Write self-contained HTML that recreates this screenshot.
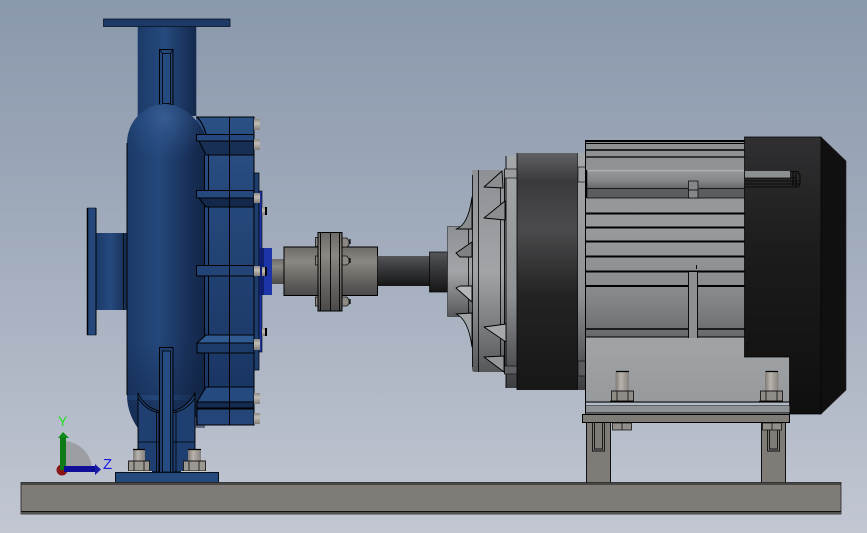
<!DOCTYPE html>
<html><head><meta charset="utf-8"><style>
html,body{margin:0;padding:0;width:867px;height:533px;overflow:hidden;background:#a5aebd}
svg{display:block}
</style></head><body>
<svg width="867" height="533" viewBox="0 0 867 533" xmlns="http://www.w3.org/2000/svg">
<defs>
<linearGradient id="bg" x1="0" y1="0" x2="0" y2="1"><stop offset="0" stop-color="#8a98ac"/><stop offset=".5" stop-color="#a4aebe"/><stop offset="1" stop-color="#c2c7d2"/></linearGradient>
<linearGradient id="pipe" x1="0" y1="0" x2="1" y2="0"><stop offset="0" stop-color="#1b3a68"/><stop offset=".45" stop-color="#264a7e"/><stop offset="1" stop-color="#13294c"/></linearGradient>
<linearGradient id="bodyH" x1="0" y1="0" x2="1" y2="0"><stop offset="0" stop-color="#1c3a68"/><stop offset=".4" stop-color="#24477b"/><stop offset=".8" stop-color="#182f57"/><stop offset="1" stop-color="#122647"/></linearGradient>
<radialGradient id="dome" gradientUnits="userSpaceOnUse" cx="165" cy="118" r="45"><stop offset="0" stop-color="#3a6096" stop-opacity=".85"/><stop offset="1" stop-color="#2a5088" stop-opacity="0"/></radialGradient>
<linearGradient id="bodyBot" x1="0" y1="0" x2="0" y2="1"><stop offset="0" stop-color="#0d1e3c" stop-opacity="0"/><stop offset="1" stop-color="#0d1e3c" stop-opacity=".65"/></linearGradient>
<linearGradient id="boxV" x1="0" y1="0" x2="0" y2="1"><stop offset="0" stop-color="#2a5084"/><stop offset="1" stop-color="#183260"/></linearGradient>
<linearGradient id="hub" x1="0" y1="0" x2="0" y2="1"><stop offset="0" stop-color="#6e6b68"/><stop offset=".3" stop-color="#8b8782"/><stop offset=".75" stop-color="#5f5d5b"/><stop offset="1" stop-color="#4b4a4a"/></linearGradient>
<linearGradient id="shaft" x1="0" y1="0" x2="0" y2="1"><stop offset="0" stop-color="#55565a"/><stop offset=".35" stop-color="#3c3d40"/><stop offset="1" stop-color="#161617"/></linearGradient>
<linearGradient id="bell" x1="0" y1="0" x2="0" y2="1"><stop offset="0" stop-color="#8d9094"/><stop offset=".5" stop-color="#a2a5a8"/><stop offset=".85" stop-color="#6f7072"/><stop offset="1" stop-color="#565759"/></linearGradient>
<linearGradient id="band" x1="0" y1="0" x2="0" y2="1"><stop offset="0" stop-color="#606163"/><stop offset=".12" stop-color="#3a3a3c"/><stop offset=".32" stop-color="#4b4b4d"/><stop offset=".6" stop-color="#232324"/><stop offset="1" stop-color="#171718"/></linearGradient>
<linearGradient id="ring" x1="0" y1="0" x2="0" y2="1"><stop offset="0" stop-color="#a5a8ab"/><stop offset=".6" stop-color="#8e9194"/><stop offset="1" stop-color="#3c3d3f"/></linearGradient>
<linearGradient id="motor" x1="0" y1="0" x2="0" y2="1"><stop offset="0" stop-color="#8c9092"/><stop offset=".45" stop-color="#979b9d"/><stop offset=".74" stop-color="#8a8d8f"/><stop offset=".9" stop-color="#78797c"/><stop offset="1" stop-color="#66686a"/></linearGradient>
<linearGradient id="plate" x1="0" y1="0" x2="0" y2="1"><stop offset="0" stop-color="#a0a4a6"/><stop offset="1" stop-color="#979a9c"/></linearGradient>
<linearGradient id="cover" x1="0" y1="0" x2="0" y2="1"><stop offset="0" stop-color="#303032"/><stop offset=".4" stop-color="#1c1c1d"/><stop offset="1" stop-color="#0f0f10"/></linearGradient>
<linearGradient id="strip" x1="0" y1="0" x2="0" y2="1"><stop offset="0" stop-color="#b5b8b9"/><stop offset=".12" stop-color="#929697"/><stop offset=".6" stop-color="#85888a"/><stop offset="1" stop-color="#66686a"/></linearGradient>
<linearGradient id="bolt" x1="0" y1="0" x2="1" y2="0"><stop offset="0" stop-color="#7e7a76"/><stop offset=".4" stop-color="#b8b3ac"/><stop offset="1" stop-color="#85817c"/></linearGradient>
<linearGradient id="boltV" x1="0" y1="0" x2="0" y2="1"><stop offset="0" stop-color="#8d8984"/><stop offset=".4" stop-color="#c3beb6"/><stop offset="1" stop-color="#827e79"/></linearGradient>
<clipPath id="bodyClip"><path d="M127 143A38.500 39 0 0 1 165 104C182 104 198 118 205 135V400H127Z M127 395C127 408 132 420 138 428H205V395Z"/></clipPath>
</defs>
<rect width="867" height="533" fill="url(#bg)"/>

<!-- triad -->
<path d="M63 470V441A29 29 0 0 1 92 470Z" fill="#9c9ea3"/>
<circle cx="62" cy="470" r="5.500" fill="#8a1518"/>
<rect x="60" y="438" width="6" height="32" fill="#0e7a14"/>
<path d="M63 432L69 438H58Z" fill="#0e8a18"/>
<rect x="64" y="466" width="31" height="6" fill="#0e0e98"/>
<path d="M101 469.500L95 464V475Z" fill="#1a1aa8"/>
<text x="58" y="426" font-family="Liberation Sans, sans-serif" font-size="14" fill="#22dd22">Y</text>
<text x="103" y="469" font-family="Liberation Sans, sans-serif" font-size="15" fill="#1a1ae6">Z</text>

<!-- pipe and flange -->
<rect x="137.500" y="26" width="59" height="90" fill="url(#pipe)"/>
<path d="M137.500 26V116M196.500 26V116" stroke="#7d8ea6" stroke-width="1" opacity=".6"/>
<rect x="103.500" y="19" width="126.500" height="7.500" fill="#1d3a66" stroke="#0a1424" stroke-width=".8"/>
<rect x="159.500" y="49.500" width="13.500" height="55" fill="none" stroke="#000" stroke-width="1"/>
<rect x="162.500" y="53.500" width="8" height="50" fill="#244a80" stroke="#000" stroke-width=".8"/>
<path d="M159.500 49.500L162.500 53.500M173 49.500L170.500 53.500" stroke="#000" stroke-width=".7"/>

<!-- left nozzle -->
<rect x="96" y="233" width="33" height="77" fill="url(#pipe)"/>
<path d="M123.500 233V310" stroke="#000" stroke-width=".8"/>
<rect x="87.500" y="208" width="8.500" height="127" fill="#25487c" stroke="#0a1424" stroke-width=".6"/>
<path d="M87.500 208V335" stroke="#000" stroke-width="1.500"/>
<path d="M96 208V335" stroke="#000" stroke-width="1"/>

<!-- right casing background -->
<rect x="196" y="117" width="58" height="308" fill="url(#boxV)"/>
<rect x="254" y="173" width="5" height="197" fill="#1e3e6e" stroke="#000" stroke-width=".7"/>
<rect x="259" y="191" width="3" height="161" fill="#1c33a0" stroke="#000" stroke-width=".6"/>
<rect x="262" y="248" width="10" height="47" fill="#1c34a8"/>
<rect x="259" y="248" width="5" height="47" fill="#0f1f70"/>
<path d="M196 117H254V425H196" fill="none" stroke="#000" stroke-width="1"/>

<!-- main body -->
<path d="M127 143A38.500 39 0 0 1 165 104C182 104 198 118 205 135V400C205 412 190 428 165 428H138C132 420 127 408 127 395Z" fill="url(#bodyH)"/>
<path d="M127 143A38.500 39 0 0 1 165 104C182 104 198 118 205 135V240H127Z" fill="url(#dome)"/>
<g clip-path="url(#bodyClip)"><rect x="127" y="340" width="78" height="88" fill="url(#bodyBot)" opacity=".8"/></g>
<path d="M127 143V395" stroke="#000" stroke-width="1"/>
<path d="M197 117C201 121 204 127 206 134" fill="none" stroke="#000" stroke-width="1.200"/>

<!-- casing lines + ribs over body -->
<path d="M204.500 155V390M208.500 155V390M229.500 117V425" stroke="#000" stroke-width="1"/>
<path d="M196.500 134.500H254V141H196.500Z" fill="#25497e" stroke="#000" stroke-width="1"/>
<path d="M199 141H254V155H206Z" fill="#182f55" stroke="#000" stroke-width="1"/>
<path d="M196.500 190.500H254V198H196.500Z" fill="#25497e" stroke="#000" stroke-width="1"/>
<path d="M199 198H254V207H206Z" fill="#13284a" stroke="#000" stroke-width="1"/>
<path d="M196.500 265.500H254V276H196.500Z" fill="#224477" stroke="#000" stroke-width="1"/>
<path d="M206 335H254V343H197Z" fill="#2f5a92" stroke="#000" stroke-width="1"/>
<path d="M197 343H254V353H197Z" fill="#1d3b69" stroke="#000" stroke-width="1"/>
<path d="M206 387H254V402H197Z" fill="#244a80" stroke="#000" stroke-width="1"/>
<path d="M197 402H254V408H197Z" fill="#152b50" stroke="#000" stroke-width="1"/>
<rect x="197" y="409" width="57" height="16" fill="#234577" stroke="#000" stroke-width="1"/>
<path d="M229.500 334V425" stroke="#000" stroke-width="1"/>
<path d="M229.500 134V208M229.500 265V277" stroke="#000" stroke-width="1"/>

<!-- casing bolts -->
<g fill="url(#boltV)">
<rect x="254" y="119" width="6" height="11"/><rect x="254" y="139" width="6" height="11"/>
<rect x="254" y="193" width="6" height="10"/><rect x="254" y="266" width="6" height="10"/>
<rect x="254" y="339" width="6" height="11"/><rect x="254" y="393" width="6" height="11"/>
<rect x="254" y="413" width="6" height="11"/>
<rect x="262" y="207" width="3" height="8"/><rect x="262" y="267" width="3" height="9"/><rect x="262" y="328" width="3" height="8"/>
</g>
<path d="M266 207V215M266 267V276M266 328V336" stroke="#000" stroke-width="2"/>

<!-- foot overlay -->
<path d="M138 393C142 402 150 409 159 411V472H138Z" fill="#1f3f70" stroke="#000" stroke-width=".9"/>
<path d="M195 393C190 402 182 409 173 411V472H195Z" fill="#1f3f70" stroke="#000" stroke-width=".9"/>
<path d="M138 398C143 406 150 411 159 413M195 398C190 406 182 411 173 413M138 442H195M156.500 411V472M176 411V472" fill="none" stroke="#000" stroke-width=".8"/>
<rect x="159.500" y="347.500" width="13.500" height="125" fill="#1f3f70" stroke="#000" stroke-width="1"/>
<rect x="162.500" y="351" width="8" height="121" fill="#264c82" stroke="#000" stroke-width=".8"/>
<rect x="115.500" y="472.500" width="103" height="10" fill="#244a7c" stroke="#06101e" stroke-width="1"/>

<!-- foot nuts -->
<g stroke="#1a1a1a" stroke-width=".9">
<rect x="133" y="449.500" width="12" height="11" fill="url(#bolt)" stroke="none"/>
<rect x="188" y="449.500" width="13" height="11" fill="url(#bolt)" stroke="none"/>
<path d="M128.500 461H149.500V471H128.500Z M134 461V471M144 461V471" fill="#9b9791"/>
<path d="M183.500 461H205.500V471H183.500Z M189 461V471M199 461V471" fill="#9b9791"/>
</g>
<path d="M126 471.500H152M181 471.500H208" stroke="#cfccc6" stroke-width="1"/>
<path d="M133 449.500H145M188 449.500H201" stroke="#000" stroke-width="1.300"/>

<!-- coupling -->
<rect x="272" y="259" width="12" height="25" fill="url(#hub)"/>
<rect x="284" y="247" width="93.500" height="48.500" fill="url(#hub)" stroke="#000" stroke-width="1"/>
<g fill="#8c8884" stroke="#111" stroke-width=".8">
<rect x="315.500" y="237.500" width="3" height="9"/><rect x="315.500" y="256" width="3" height="9"/><rect x="315.500" y="297" width="3" height="9"/>
<path d="M342 238H347L349 241V245L347 247H342Z"/><path d="M342 256H347L349 259V263L347 265H342Z"/><path d="M342 297H347L349 300V304L347 306H342Z"/>
</g>
<path d="M350 239V244M350 258V263M350 299V304" stroke="#000" stroke-width="1.200"/>
<rect x="318" y="232.500" width="24" height="78.500" fill="url(#hub)" stroke="#000" stroke-width="1"/>
<path d="M320.500 233V311M330.500 232V311M339.500 233V311" stroke="#000" stroke-width=".9"/>

<!-- shaft -->
<rect x="377.500" y="256" width="52" height="30" fill="url(#shaft)"/>
<rect x="429.500" y="252" width="18" height="40" fill="url(#shaft)" stroke="#000" stroke-width=".7"/>

<!-- bell -->
<rect x="447.500" y="226.500" width="25" height="90" fill="url(#bell)" stroke="#1a1a1a" stroke-width=".5"/>
<path d="M468.500 227V316" stroke="#000" stroke-width=".8"/>
<path d="M472 170H506V372H475Q472 372 472 369Z" fill="url(#bell)"/>
<path d="M472.500 175V367M478.500 170V372M500.500 178V366" stroke="#000" stroke-width=".8"/>
<rect x="506" y="156" width="11.500" height="232" fill="url(#ring)"/>
<path d="M506 156V388M504.500 170V374" stroke="#000" stroke-width=".9"/>
<rect x="504.500" y="169" width="13" height="9" fill="#9b9ea1" stroke="#111" stroke-width=".7"/>
<rect x="504.500" y="366" width="13" height="8" fill="#5f6063" stroke="#111" stroke-width=".7"/>
<g stroke="#000" stroke-width=".9" stroke-linejoin="round">
<path d="M484 187L502 171L503 188Z" fill="#8b8e91"/>
<path d="M484 218L505 201V220Z" fill="#8b8e91"/>
<path d="M484 327L506 342V324Z" fill="#a6a9ab"/>
<path d="M484 357L504 372V356Z" fill="#95989b"/>
<path d="M456 229C466 226 470 212 472 197V229Z" fill="#8b8e91"/>
<path d="M456 253L472 242V257H460Z" fill="#7f8285"/>
<path d="M456 288L472 302V286H460Z" fill="#b5b7ba"/>
<path d="M456 314C466 318 470 332 472 347V313Z" fill="#a2a5a8"/>
</g>

<!-- dark band -->
<rect x="517" y="153" width="61" height="237" fill="url(#band)"/>
<path d="M517 153V390M578 153V390" stroke="#000" stroke-width=".8"/>
<rect x="578" y="153" width="7.500" height="237" fill="url(#ring)"/>
<rect x="578" y="167" width="7.500" height="15" fill="#9ea1a4" stroke="#111" stroke-width=".7"/>
<rect x="578" y="361" width="7.500" height="15" fill="#5a5b5d" stroke="#111" stroke-width=".7"/>

<!-- motor -->
<rect x="585.500" y="140" width="160" height="197" fill="url(#motor)"/>
<rect x="585.500" y="337" width="204" height="66" fill="url(#plate)"/>
<g stroke="#000">
<path d="M585.500 141H745" stroke-width="2"/><path d="M585.500 143.500H745" stroke-width="1"/>
<path d="M585.500 150H745" stroke-width="1.600"/><path d="M585.500 157H745" stroke-width="1.300"/>
<path d="M585.500 213.500H745M585.500 227.500H745M585.500 241.500H745M585.500 256.500H745M585.500 271.500H745M585.500 286H745" stroke-width="2"/>
<path d="M585.500 329H745" stroke-width="1.500"/><path d="M585.500 337H745" stroke-width="1"/>
<path d="M585.500 140V402" stroke-width="1"/>
</g>
<rect x="587" y="170" width="158" height="18" fill="url(#strip)"/>
<rect x="587" y="188" width="158" height="10" fill="#5b5d5f"/>
<path d="M587 188.500H688M699 188.500H745M587 198H745" stroke="#000" stroke-width=".8"/>
<path d="M586.500 170V198" stroke="#000" stroke-width="1.500"/>
<rect x="688.500" y="181" width="9.500" height="17" fill="#85888a" stroke="#000" stroke-width=".7"/>
<path d="M688.500 190H698" stroke="#000" stroke-width=".8"/>
<rect x="688.500" y="272" width="9" height="66" fill="#8d9093"/>
<path d="M688.500 272V338M697.500 272V338M696.500 265V269" stroke="#000" stroke-width=".9"/>

<!-- fan cover -->
<path d="M821 137L846 161V390L821 414Z" fill="#101011" stroke="#222" stroke-width=".6"/>
<path d="M744.500 137H821V414H789.500V357H744.500Z" fill="url(#cover)" stroke="#000" stroke-width=".7"/>
<rect x="745" y="171" width="45" height="7" fill="#8d9092"/>
<path d="M745 178H796M745 181H799M745 184H800M745 187H798M790 171.500H798L800 175V184L798 187M793 172V186M796 172V187" fill="none" stroke="#000" stroke-width=".8"/>

<!-- motor mount -->
<path d="M585.500 402H789.500M585.500 406H789.500" stroke="#000" stroke-width=".9"/>
<rect x="585.500" y="406" width="204" height="7" fill="#8f9294"/>
<path d="M585.500 413H789.500M585.500 337V414" stroke="#000" stroke-width="1"/>
<g stroke="#1a1a1a" stroke-width=".9">
<rect x="615.500" y="371.500" width="13.500" height="19" fill="url(#bolt)" stroke="none"/>
<rect x="765" y="371.500" width="13.500" height="19" fill="url(#bolt)" stroke="none"/>
<path d="M611.500 391H633.500V401H611.500Z M617 391V401M628 391V401" fill="#8f8b86"/>
<path d="M760.500 391H782.500V401H760.500Z M766 391V401M777 391V401" fill="#8f8b86"/>
</g>
<path d="M616 371.500H629M765.500 371.500H778" stroke="#000" stroke-width="1.300"/>
<path d="M610 401.500H634M759 401.500H783" stroke="#000" stroke-width="1.500"/>

<!-- legs -->
<rect x="586.500" y="422" width="24" height="61" fill="#7f7b77" stroke="#000" stroke-width=".9"/>
<rect x="761.500" y="422" width="24" height="61" fill="#7f7b77" stroke="#000" stroke-width=".9"/>
<path d="M592.500 423V451H604.500V423M594.500 423V449H602.500V423M767.500 423V451H779.500V423M769.500 423V449H777.500V423" fill="none" stroke="#111" stroke-width=".9"/>
<rect x="582.500" y="414.500" width="207" height="8" fill="#7f7b77" stroke="#000" stroke-width="1"/>
<path d="M612.500 423H631.500V430H612.500Z M622 423V430" fill="#928e89" stroke="#111" stroke-width=".8"/>
<path d="M762.500 423H781.500V430H762.500Z M772 423V430" fill="#928e89" stroke="#111" stroke-width=".8"/>

<!-- base beam -->
<rect x="21" y="482.500" width="820" height="31.500" fill="#7f7b77" stroke="#222" stroke-width=".8"/>
<path d="M21 484H841" stroke="#111" stroke-width="1"/>
<path d="M21 511.500H841" stroke="#111" stroke-width="1.100"/>
<rect x="21" y="512" width="820" height="2" fill="#55534f"/>
</svg>
</body></html>
